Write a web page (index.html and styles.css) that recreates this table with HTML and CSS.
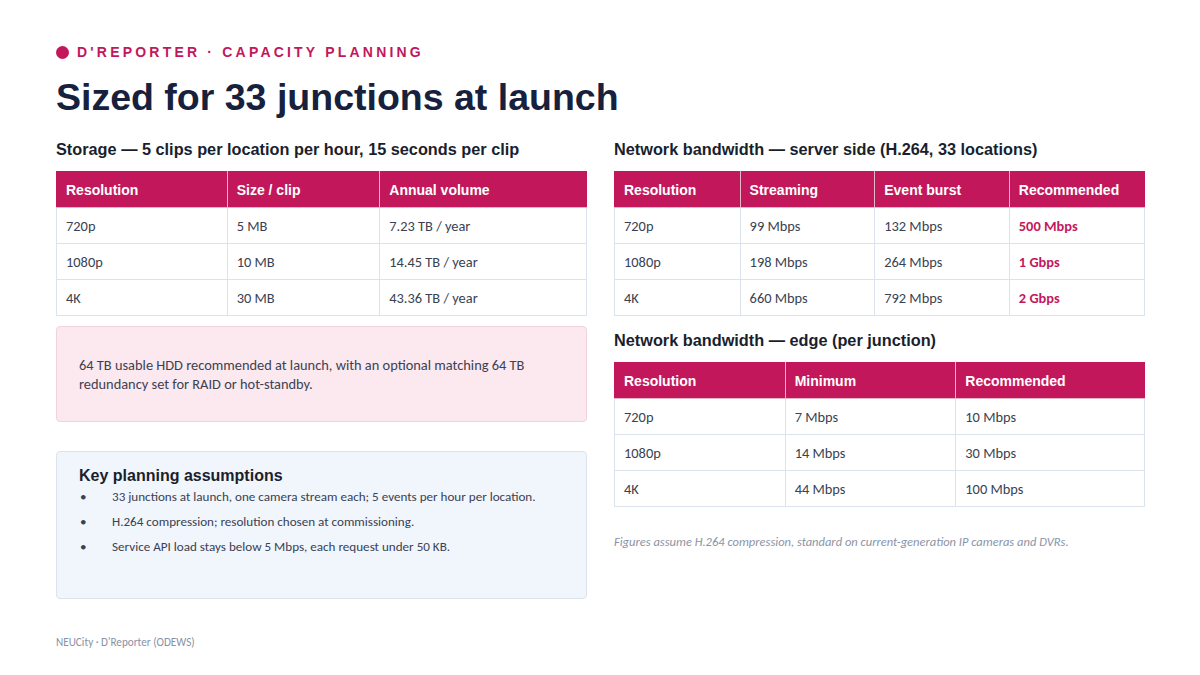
FILE: index.html
```html
<!DOCTYPE html>
<html lang="en">
<head>
<meta charset="utf-8">
<title>Capacity planning</title>
<link rel="stylesheet" href="styles.css">
</head>
<body>
<div class="slide">
  <div class="eyebrow"><span class="dot"></span><span>D'REPORTER · CAPACITY PLANNING</span></div>
  <h1 class="title">Sized for 33 junctions at launch</h1>
  <div class="cols">
    <div class="col">
      <h2 class="sec">Storage — 5 clips per location per hour, 15 seconds per clip</h2>
      <table class="tbl">
        <colgroup><col style="width:32.2%"><col style="width:28.8%"><col style="width:39%"></colgroup>
        <thead><tr><th>Resolution</th><th>Size / clip</th><th>Annual volume</th></tr></thead>
        <tbody>
          <tr><td>720p</td><td>5 MB</td><td>7.23 TB / year</td></tr>
          <tr><td>1080p</td><td>10 MB</td><td>14.45 TB / year</td></tr>
          <tr><td>4K</td><td>30 MB</td><td>43.36 TB / year</td></tr>
        </tbody>
      </table>
      <div class="note">64 TB usable HDD recommended at launch, with an optional matching 64 TB redundancy set for RAID or hot-standby.</div>
      <div class="assume">
        <h3 class="assume-title">Key planning assumptions</h3>
        <ul class="bullets">
          <li>33 junctions at launch, one camera stream each; 5 events per hour per location.</li>
          <li>H.264 compression; resolution chosen at commissioning.</li>
          <li>Service API load stays below 5 Mbps, each request under 50 KB.</li>
        </ul>
      </div>
    </div>
    <div class="col">
      <h2 class="sec">Network bandwidth — server side (H.264, 33 locations)</h2>
      <table class="tbl">
        <colgroup><col style="width:23.7%"><col style="width:25.4%"><col style="width:25.4%"><col style="width:25.5%"></colgroup>
        <thead><tr><th>Resolution</th><th>Streaming</th><th>Event burst</th><th>Recommended</th></tr></thead>
        <tbody>
          <tr><td>720p</td><td>99 Mbps</td><td>132 Mbps</td><td class="hi">500 Mbps</td></tr>
          <tr><td>1080p</td><td>198 Mbps</td><td>264 Mbps</td><td class="hi">1 Gbps</td></tr>
          <tr><td>4K</td><td>660 Mbps</td><td>792 Mbps</td><td class="hi">2 Gbps</td></tr>
        </tbody>
      </table>
      <h2 class="sec sec2">Network bandwidth — edge (per junction)</h2>
      <table class="tbl">
        <colgroup><col style="width:32.2%"><col style="width:32.2%"><col style="width:35.6%"></colgroup>
        <thead><tr><th>Resolution</th><th>Minimum</th><th>Recommended</th></tr></thead>
        <tbody>
          <tr><td>720p</td><td>7 Mbps</td><td>10 Mbps</td></tr>
          <tr><td>1080p</td><td>14 Mbps</td><td>30 Mbps</td></tr>
          <tr><td>4K</td><td>44 Mbps</td><td>100 Mbps</td></tr>
        </tbody>
      </table>
      <p class="caption">Figures assume H.264 compression, standard on current-generation IP cameras and DVRs.</p>
    </div>
  </div>
  <div class="footer">NEUCity · D'Reporter (ODEWS)</div>
</div>
</body>
</html>
```

FILE: styles.css
```css
* { box-sizing: border-box; }
html, body { margin: 0; padding: 0; background: #ffffff; }
body { width: 1200px; height: 675px; overflow: hidden; font-family: Carlito, Lato, "Liberation Sans", sans-serif; }

.slide { padding: 44px 55px 0 56px; }

.eyebrow {
  display: flex; align-items: center; gap: 8px;
  font-family: "Liberation Sans", Arial, sans-serif;
  font-weight: 700; font-size: 14px; letter-spacing: 3.2px;
  color: #c2185b; height: 16px;
}
.dot { width: 13px; height: 13px; border-radius: 50%; background: #c2185b; display: inline-block; }

.title {
  margin: 14px 0 0 0;
  font-family: "Liberation Sans", Arial, sans-serif;
  font-weight: 700; font-size: 37.5px; line-height: 46px;
  color: #17213d;
}

.cols { display: grid; grid-template-columns: 531px 531px; column-gap: 27px; margin-top: 19px; }
.col { display: flex; flex-direction: column; }

.sec {
  margin: 0 0 12px 0;
  font-family: "Liberation Sans", Arial, sans-serif;
  font-weight: 700; font-size: 16.3px; line-height: 20px; color: #1a1f2e;
}
.sec2 { margin-top: 14px; }

.tbl { width: 100%; border-collapse: collapse; table-layout: fixed; }
.tbl th {
  background: #c2185b; color: #ffffff; text-align: left;
  font-family: "Liberation Sans", Arial, sans-serif; font-weight: 700; font-size: 14px;
  height: 36px; padding: 0 9px; border: 1px solid #e3b6c8; border-top-color: #c2185b;
}
.tbl th:first-child { border-left-color: #c2185b; }
.tbl th:last-child { border-right-color: #c2185b; }
.tbl td {
  height: 36px; padding: 0 9px; font-size: 14.4px; color: #3a4252;
  border: 1px solid #dde3ec;
}
.tbl td.hi { color: #c2185b; font-weight: 700; }

.note {
  margin-top: 10px; height: 96px;
  background: #fce8ef; border: 1px solid #f1d2de; border-radius: 4px;
  padding: 29px 22px 0; font-size: 14.4px; line-height: 19px; color: #3a4252;
}

.assume {
  margin-top: 29px; height: 148px;
  background: #f1f5fc; border: 1px solid #dce3ee; border-radius: 4px;
  padding: 14px 22px;
}
.assume-title {
  margin: 0;
  font-family: "Liberation Sans", Arial, sans-serif;
  font-weight: 700; font-size: 16px; line-height: 20px; color: #1a1f2e;
}
.bullets { list-style: none; margin: -1px 0 0 0; padding: 0; }
.bullets li {
  position: relative; padding-left: 33px; font-size: 13.1px; line-height: 25px; color: #3a4252;
}
.bullets li::before {
  content: "•"; position: absolute; left: 1px; top: 0; color: #3a4252;
}

.caption {
  margin: 27px 0 0 0; font-style: italic; font-size: 12.5px; color: #8a94a8;
}

.footer { margin-top: 36px; font-size: 11.2px; color: #8792a6; }
```
